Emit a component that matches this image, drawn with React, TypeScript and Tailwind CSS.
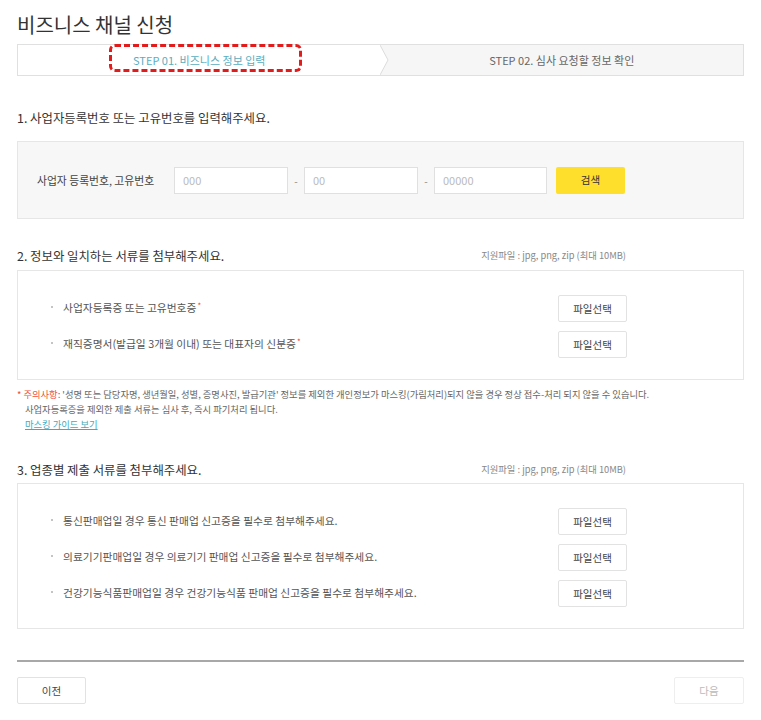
// Business channel application form - step 1
const FONT = { fontFamily: '"Noto Sans CJK KR", "Noto Sans", sans-serif' }

function FileButton({ label = '파일선택' }: { label?: string }) {
  return (
    <button className="w-[69px] h-[27px] bg-white border border-[#e2e2e2] rounded-[2px] text-[10.5px] text-[#444]">
      {label}
    </button>
  )
}

function DocRow({ text, required }: { text: string; required?: boolean }) {
  return (
    <div className="flex items-center h-[27px]">
      <div className="flex-1 flex items-center text-[10.75px] text-[#555]">
        <span className="w-[12px] flex">
          <span className="w-[2px] h-[2px] bg-[#c4c4c4] -mt-[3px]" />
        </span>
        <span>{text}</span>
        {required && <span className="text-[#f33] text-[8px] leading-none self-start mt-[2px] ml-[1px]">*</span>}
      </div>
      <FileButton />
    </div>
  )
}

function SectionHead({ title, note }: { title: string; note?: string }) {
  return (
    <div className="flex items-center h-[20px]">
      <h3 className="flex-1 text-[12.4px] text-[#333]">{title}</h3>
      {note && <span className="text-[9.3px] text-[#888] mr-[118px]">{note}</span>}
    </div>
  )
}

export default function App() {
  return (
    <div className="bg-white min-h-[720px] px-[17px] pb-4" style={FONT}>
      <h1 className="text-[20px] leading-[28px] pt-[11px] text-[#333]">비즈니스 채널 신청</h1>

      {/* Steps */}
      <div className="relative mt-[5px] flex h-[32px] border border-[#e0e0e0]">
        <div className="flex-1 flex items-center justify-center text-[11px] text-[#5aaec0] bg-white">
          STEP 01. 비즈니스 정보 입력
        </div>
        <div className="flex-1 flex items-center justify-center text-[11px] text-[#666] bg-[#f6f6f6]">
          STEP 02. 심사 요청할 정보 확인
        </div>
        <svg className="absolute left-[362px] top-0" width="10" height="30" viewBox="0 0 10 30">
          <polygon points="0,0 8,15 0,30" fill="#ffffff" />
          <polyline points="0,0 8,15 0,30" fill="none" stroke="#dcdcdc" strokeWidth="1" />
        </svg>
        <div className="absolute left-[91px] -top-[1px] w-[193px] h-[28px] border-[3px] border-dashed border-[#e41b1b] rounded-[6px]" />
      </div>

      {/* Section 1 */}
      <div className="mt-[32px]">
        <SectionHead title="1. 사업자등록번호 또는 고유번호를 입력해주세요." />
      </div>
      <div className="mt-[13px] h-[78px] flex items-center bg-[#f7f7f7] border border-[#e6e6e6] pl-[19px]">
        <span className="w-[137px] text-[10.8px] text-[#444]">사업자 등록번호, 고유번호</span>
        <input className="w-[114px] h-[27px] bg-white border border-[#e0e0e0] px-2 text-[11px] placeholder:text-[#bbb]" placeholder="000" />
        <span className="w-[16px] text-center text-[10px] text-[#888]">-</span>
        <input className="w-[114px] h-[27px] bg-white border border-[#e0e0e0] px-2 text-[11px] placeholder:text-[#bbb]" placeholder="00" />
        <span className="w-[16px] text-center text-[10px] text-[#888]">-</span>
        <input className="w-[113px] h-[27px] bg-white border border-[#e0e0e0] px-2 text-[11px] placeholder:text-[#bbb]" placeholder="00000" />
        <button className="ml-[9px] w-[69px] h-[27px] bg-[#fedf2b] rounded-[2px] text-[10.5px] text-[#333]">검색</button>
      </div>

      {/* Section 2 */}
      <div className="mt-[27px]">
        <SectionHead title="2. 정보와 일치하는 서류를 첨부해주세요." note="지원파일 : jpg, png, zip (최대 10MB)" />
      </div>
      <div className="mt-[4px] border border-[#e6e6e6] pt-[24px] pb-[21px] pl-[33px] pr-[116px] flex flex-col gap-[9px]">
        <DocRow text="사업자등록증 또는 고유번호증" required />
        <DocRow text="재직증명서(발급일 3개월 이내) 또는 대표자의 신분증" required />
      </div>

      {/* Notice */}
      <div className="mt-[7px] text-[9.3px] leading-[15px] text-[#666]">
        <p>
          <span className="text-[#f0503c]">* 주의사항</span>: '성명 또는 담당자명, 생년월일, 성별, 증명사진, 발급기관' 정보를 제외한 개인정보가 마스킹(가림처리)되지 않을 경우 정상 접수-처리 되지 않을 수 있습니다.
        </p>
        <p className="pl-[8px]">사업자등록증을 제외한 제출 서류는 심사 후, 즉시 파기처리 됩니다.</p>
        <p className="pl-[8px]">
          <a className="text-[#45a9bb] underline">마스킹 가이드 보기</a>
        </p>
      </div>

      {/* Section 3 */}
      <div className="mt-[28px]">
        <SectionHead title="3. 업종별 제출 서류를 첨부해주세요." note="지원파일 : jpg, png, zip (최대 10MB)" />
      </div>
      <div className="mt-[3px] border border-[#e6e6e6] pt-[24px] pb-[21px] pl-[33px] pr-[116px] flex flex-col gap-[9px]">
        <DocRow text="통신판매업일 경우 통신 판매업 신고증을 필수로 첨부해주세요." />
        <DocRow text="의료기기판매업일 경우 의료기기 판매업 신고증을 필수로 첨부해주세요." />
        <DocRow text="건강기능식품판매업일 경우 건강기능식품 판매업 신고증을 필수로 첨부해주세요." />
      </div>

      {/* Footer */}
      <div className="mt-[31px] border-t-2 border-[#a8a8a8]" />
      <div className="mt-[15px] flex justify-between">
        <button className="w-[69px] h-[27px] bg-white border border-[#e2e2e2] rounded-[2px] text-[10.5px] text-[#444]">이전</button>
        <button className="w-[70px] h-[27px] bg-white border border-[#eeeeee] rounded-[2px] text-[10.5px] text-[#bbb]">다음</button>
      </div>
    </div>
  )
}
